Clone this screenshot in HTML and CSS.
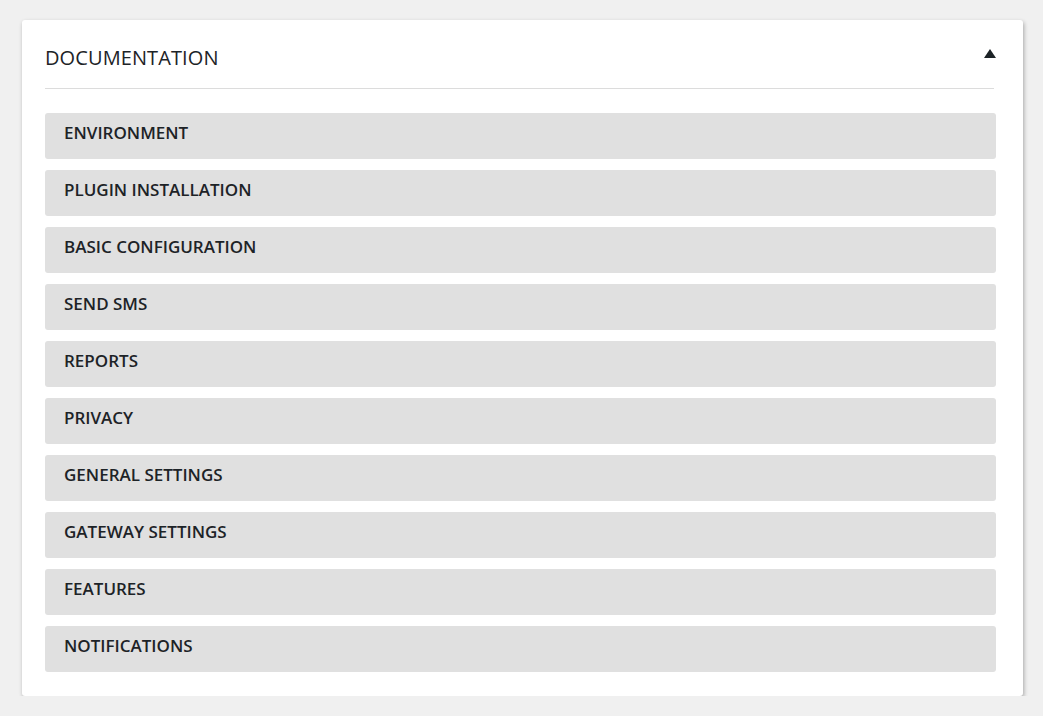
FILE: index.html
```html
<!DOCTYPE html>
<html>
<head>
<meta charset="utf-8">
<link rel="stylesheet" href="styles.css">
</head>
<body>
<div class="card">
  <div class="card-header">
    <h2 class="card-title">DOCUMENTATION</h2>
    <span class="toggle"></span>
  </div>
  <ul class="doc-list">
    <li class="doc-item">ENVIRONMENT</li>
    <li class="doc-item">PLUGIN INSTALLATION</li>
    <li class="doc-item">BASIC CONFIGURATION</li>
    <li class="doc-item">SEND SMS</li>
    <li class="doc-item">REPORTS</li>
    <li class="doc-item">PRIVACY</li>
    <li class="doc-item">GENERAL SETTINGS</li>
    <li class="doc-item">GATEWAY SETTINGS</li>
    <li class="doc-item">FEATURES</li>
    <li class="doc-item">NOTIFICATIONS</li>
  </ul>
</div>
</body>
</html>
```

FILE: styles.css
```css
html, body {
  margin: 0;
  padding: 0;
  background: #f0f0f0;
  font-family: "Open Sans", "Noto Sans", sans-serif;
  color: #23282d;
}
body {
  padding: 20px 20px 0 22px;
}
.card {
  width: 1001px;
  box-sizing: border-box;
  background: #fff;
  border-radius: 3px;
  box-shadow: 1px 2px 4px rgba(0,0,0,0.3);
  padding: 0 27px 24px 23px;
}
.card-header {
  display: flex;
  align-items: center;
  justify-content: space-between;
  height: 68px;
  border-bottom: 1px solid #dcdcdc;
  margin-right: 2px;
  margin-bottom: 24px;
}
.card-title {
  margin: 0;
  padding-top: 7px;
  font-size: 20px;
  font-weight: 500;
  letter-spacing: 0.1px;
  color: #1d2327;
}
.toggle {
  width: 0;
  height: 0;
  border-left: 6px solid transparent;
  border-right: 6px solid transparent;
  border-bottom: 9px solid #1d2327;
  margin-top: -2px;
  margin-right: -2px;
}
.doc-list {
  list-style: none;
  margin: 0;
  padding: 0;
  display: flex;
  flex-direction: column;
  gap: 11px;
}
.doc-item {
  height: 46px;
  box-sizing: border-box;
  background: #e0e0e0;
  border-radius: 3px;
  padding: 0 19px 7px;
  display: flex;
  align-items: center;
  font-size: 17px;
  font-weight: 600;
  color: #1d2327;
}
```
